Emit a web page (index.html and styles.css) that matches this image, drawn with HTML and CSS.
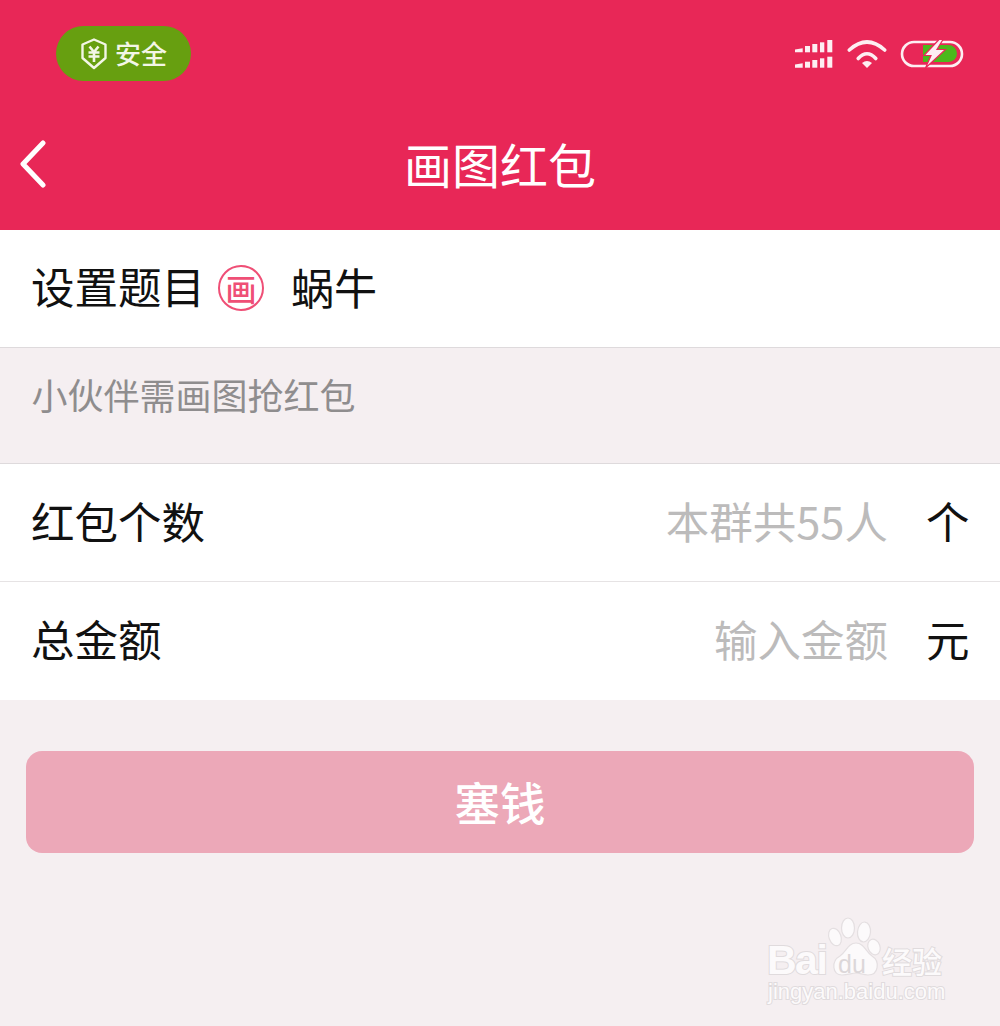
FILE: index.html
```html
<!DOCTYPE html>
<html lang="zh">
<head>
<meta charset="utf-8">
<title>画图红包</title>
<link rel="stylesheet" href="styles.css">
</head>
<body>
<div class="page">
  <header class="header">
    <div class="status">
      <div class="pill">
        <svg class="shield" viewBox="0 0 28 32" width="28" height="32">
          <path d="M14 1.500 L25.500 6.500 V20 L14 30 L2.500 20 V6.500 Z" fill="none" stroke="#f3f6e6" stroke-width="2.400" stroke-linejoin="round"/>
          <path d="M9.500 8.500 L14 14 L18.500 8.500 M8.500 14.500 H19.500 M8.500 18.500 H19.500 M14 14 V24" fill="none" stroke="#f3f6e6" stroke-width="2.600"/>
        </svg>
        <span class="pill-text">安全</span>
      </div>
      <div class="indicators">
        <svg class="ind-signal" viewBox="0 0 38 28" width="38" height="28">
          <g fill="#fdeef2">
            <path d="M0 9.500 L7.700 8.300 V12.300 H0 Z"/><rect x="10" y="6" width="5" height="6.300"/><rect x="17.300" y="4" width="5" height="8.300"/><rect x="25" y="2.300" width="4.300" height="10"/><rect x="32.300" y="0" width="5" height="12.300"/>
            <path d="M0 24.500 L7.700 23.300 V27.700 H0 Z"/><rect x="10" y="21.700" width="5" height="6"/><rect x="17.300" y="20" width="5" height="7.700"/><rect x="25" y="18.300" width="4.300" height="9.400"/><rect x="32.300" y="16.700" width="5" height="11"/>
          </g>
        </svg>
        <svg class="ind-wifi" viewBox="0 0 40 30" width="40" height="30">
          <g fill="none" stroke="#fdeef2" stroke-width="3.600" stroke-linecap="round">
            <path d="M2.300 12 Q20 -4 37.700 12"/>
            <path d="M11.200 20.500 Q20 11 28.800 20.500"/>
          </g>
          <path d="M15 25 Q20 21 25 25 L20 30 Z" fill="#fdeef2"/>
        </svg>
        <svg class="ind-battery" viewBox="0 0 64 30" width="64" height="30">
          <rect x="2" y="4" width="60" height="24" rx="12" fill="none" stroke="#fdeef2" stroke-width="2.600"/>
          <path d="M23 7 H48.500 A8.500 8.500 0 0 1 48.500 24 H23 Z" fill="#4cb81c"/>
          <path d="M39 1.500 L24 17.500 H31 L25.500 30 L45.500 11.500 H37 L43 1.500 Z" fill="#fdeef2" stroke="#e82757" stroke-width="1.200"/>
        </svg>
      </div>
    </div>
    <div class="nav">
      <svg class="back" viewBox="0 0 28 48" width="28" height="48">
        <path d="M23 3 L3 24 L23 45" fill="none" stroke="#fff" stroke-width="5" stroke-linecap="round" stroke-linejoin="round"/>
      </svg>
      <h1 class="title">画图红包</h1>
    </div>
  </header>

  <section class="row row-topic">
    <span class="label">设置题目</span>
    <span class="badge"><span class="badge-char">画</span></span>
    <span class="topic">蜗牛</span>
  </section>
  <p class="hint">小伙伴需画图抢红包</p>
  <section class="row row-split">
    <span class="label">红包个数</span>
    <span class="placeholder">本群共55人</span>
    <span class="unit">个</span>
  </section>
  <section class="row row-split row-last">
    <span class="label">总金额</span>
    <span class="placeholder">输入金额</span>
    <span class="unit">元</span>
  </section>
  <div class="action"><button class="submit">塞钱</button></div>

  <div class="watermark">
    <svg class="paw" viewBox="0 0 60 62" width="60" height="62">
      <g fill="#fcfafb" stroke="#e4dfe1" stroke-width="1.200">
        <ellipse cx="9" cy="22" rx="6" ry="9" transform="rotate(-20 9 22)"/>
        <ellipse cx="22" cy="13" rx="6.500" ry="10"/>
        <ellipse cx="38" cy="17" rx="6.500" ry="10" transform="rotate(5 38 17)"/>
        <ellipse cx="48" cy="32" rx="6" ry="8" transform="rotate(-20 48 32)"/>
        <path d="M30 28 C38 28 40 37 46 41 C54 46 53 60 42 60 C37 60 34 58 30 58 C26 58 22 60 16 60 C6 60 5 46 14 41 C20 37 22 28 30 28 Z"/>
      </g>
    </svg>
    <span class="wm-text wm-bai">Bai</span>
    <span class="wm-du">du</span>
    <span class="wm-text wm-jy">经验</span>
    <span class="wm-text wm-url">jingyan.baidu.com</span>
  </div>
</div>
</body>
</html>
```

FILE: styles.css
```css
* { box-sizing: border-box; }
html, body { margin: 0; padding: 0; }
body {
  font-family: "Noto Sans CJK SC", "Noto Sans", sans-serif;
  background: #f5eff1;
  color: #111;
}
.page {
  position: relative;
  height: 1026px;
  overflow: hidden;
  background: #f5eff1;
}
.header {
  height: 230px;
  background: #e82757;
  color: #fff;
}
.status {
  height: 108px;
  padding: 26px 36px 0 56px;
  display: flex;
  justify-content: space-between;
  align-items: flex-start;
}
.pill {
  width: 135px;
  height: 55px;
  border-radius: 28px;
  background: #679f10;
  display: flex;
  align-items: center;
  padding-left: 24px;
  gap: 7px;
  color: #f3f6e6;
}
.pill-text {
  font-size: 26px;
  font-weight: 500;
  line-height: 1;
  margin-top: -2px;
}
.indicators {
  display: flex;
  align-items: flex-start;
  gap: 14px;
  padding-top: 14px;
}
.ind-wifi { margin-top: -2px; }
.ind-battery { margin-top: -2px; margin-left: -1px; }
.nav {
  height: 122px;
  position: relative;
  display: flex;
  align-items: center;
  justify-content: center;
}
.back {
  position: absolute;
  left: 20px;
  top: 32px;
}
.title {
  margin: 0 0 12px;
  font-size: 48px;
  font-weight: 400;
  line-height: 1;
}
.row {
  background: #fff;
  display: flex;
  align-items: center;
  padding: 0 32px 4px 31px;
  font-size: 43.500px;
  line-height: 1;
}
.row-topic {
  height: 118px;
  padding-bottom: 5px;
  border-bottom: 1px solid #dedadc;
}
.badge {
  width: 46px;
  height: 46px;
  margin-left: 13px;
  margin-top: 3px;
  border: 2px solid #ef4f76;
  border-radius: 50%;
  display: flex;
  align-items: center;
  justify-content: center;
}
.badge-char {
  color: #ef4f76;
  font-size: 31px;
  font-weight: 500;
  line-height: 1;
}
.topic { margin-left: 27px; font-size: 43px; }
.hint {
  margin: 0;
  height: 116px;
  padding-top: 24px;
  padding-left: 31.500px;
  font-size: 36px;
  line-height: 44px;
  color: #8f8d8e;
  border-bottom: 1px solid #dedadc;
}
.row-split { height: 118px; border-bottom: 1px solid #e6e3e4; }
.row-last { border-bottom: 0; }
.placeholder {
  margin-left: auto;
  color: #bcbbbb;
}
.unit { margin-left: 38px; margin-right: -1.500px; }
.action { padding: 51px 26px 0; }
.submit {
  display: block;
  width: 100%;
  height: 102px;
  border: 0;
  border-radius: 16px;
  background: #eca8b8;
  color: #fff;
  font-family: inherit;
  font-size: 45.500px;
  font-weight: 500;
  padding: 0 0 2px;
}
.watermark {
  position: absolute;
  left: 766px;
  top: 915px;
  width: 182px;
  height: 95px;
  color: #fcfafb;
}
.watermark span {
  position: absolute;
  line-height: 1;
}
.wm-text {
  -webkit-text-stroke: 2px #e0dbdd;
  paint-order: stroke fill;
}
.paw {
  position: absolute;
  left: 60px;
  top: 0;
}
.wm-bai {
  left: 1px;
  top: 25px;
  font-family: "Liberation Sans", sans-serif;
  font-size: 41px;
  font-weight: 700;
  letter-spacing: -1.500px;
}
.wm-du {
  left: 72px;
  top: 37px;
  font-family: "Liberation Sans", sans-serif;
  font-size: 25px;
  color: #dcd7d9;
}
.wm-jy {
  left: 116px;
  top: 30px;
  font-size: 30px;
  font-weight: 500;
}
.wm-url {
  left: 2px;
  top: 66px;
  font-family: "Liberation Sans", sans-serif;
  font-size: 22px;
}
```
